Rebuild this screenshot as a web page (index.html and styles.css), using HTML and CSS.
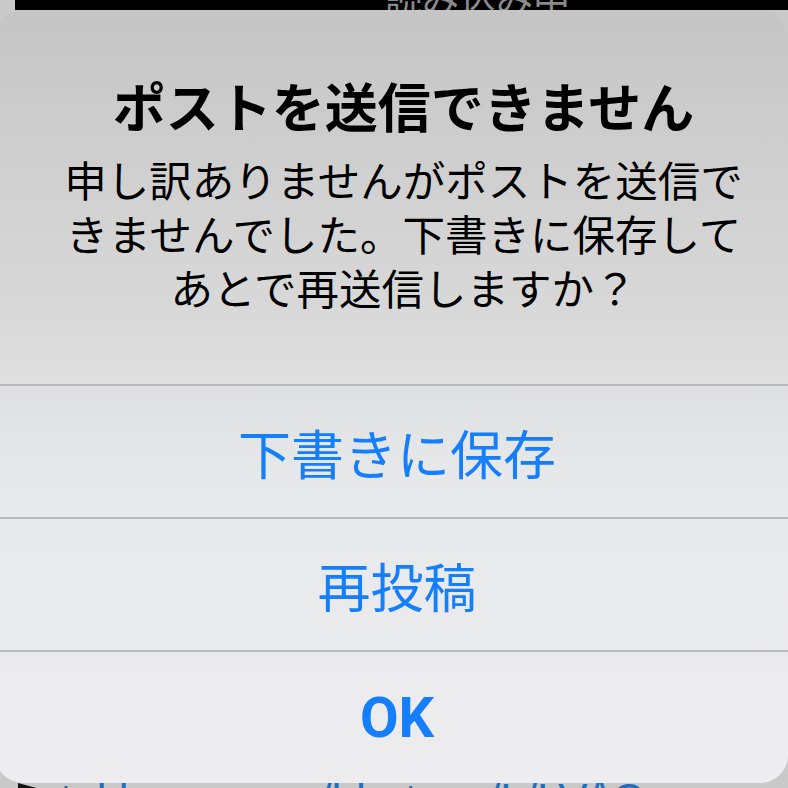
FILE: index.html
```html
<!DOCTYPE html>
<html lang="ja">
  <head>
    <meta charset="UTF-8" />
    <meta name="viewport" content="width=device-width, initial-scale=1.0" />
    <title>ポストを送信できません</title>
    <link rel="stylesheet" href="styles.css">
  </head>

  <body>
    <div class="screen">
      <!-- what is left of the page behind the alert -->
      <div class="topbar"><span>読み込み中</span></div>

      <div class="alert">
        <div class="alert-body">
          <h1 class="alert-title">ポストを送信できません</h1>
          <p class="alert-message">申し訳ありませんがポストを送信できませんでした。下書きに保存してあとで再送信しますか？</p>
        </div>
        <button class="alert-action">下書きに保存</button>
        <button class="alert-action">再投稿</button>
        <button class="alert-action alert-action_main">OK</button>
      </div>

      <div class="bottombar">
        <span class="arrow"></span>
        <span class="link">tekk.con.com/hhotsoo/L/LV/\C</span>
      </div>
    </div>
  </body>
</html>
```

FILE: styles.css
```css
body {
  margin: 0;
  background: #c9c9c9;
  font-family: "Noto Sans CJK JP", "Noto Sans", sans-serif;
}

.screen {
  display: flex;
  flex-direction: column;
  width: 788px;
  height: 788px;
  overflow: hidden;
}

.topbar {
  display: flex;
  align-items: flex-end;
  flex-shrink: 0;
  height: 10px;
  margin-left: 15px;
  padding-left: 370px;
  background: #000;
  overflow: hidden;
}

.topbar span {
  color: #8a8a8a;
  font-size: 37px;
  line-height: 36px;
  margin-bottom: -6px;
  white-space: nowrap;
}

.alert {
  display: flex;
  flex-direction: column;
  flex-shrink: 0;
  height: 773px;
  margin-left: -5px;
  width: 793px;
  border-radius: 28px;
  overflow: hidden;
  background: linear-gradient(
    180deg,
    #c5c5c5 0%,
    #d9d9d9 40%,
    #e7e8ea 60%,
    #ededef 100%
  );
}

.alert-body {
  height: 375px;
  box-sizing: border-box;
  padding: 65px 38px 0 62px;
  text-align: center;
  color: #000;
}

.alert-title {
  margin: 0;
  font-size: 53px;
  font-weight: 700;
  line-height: 60px;
}

.alert-message {
  margin: 17px 0 0;
  font-size: 42.5px;
  font-weight: 400;
  line-height: 54px;
}

.alert-action {
  height: 133px;
  flex-shrink: 0;
  border: none;
  border-top: 2px solid #b9b9bb;
  background: transparent;
  color: #147efb;
  font-family: "Noto Sans CJK JP", sans-serif;
  font-size: 53px;
  font-weight: 400;
  padding: 0 0 0 11px;
}

.alert-action_main {
  font-family: "Roboto", "Noto Sans", sans-serif;
  font-size: 56px;
  font-weight: 700;
}

.bottombar {
  display: flex;
  align-items: flex-start;
  height: 5px;
  padding-left: 18px;
  overflow: hidden;
}

.arrow {
  width: 22px;
  height: 10px;
  background: #111;
  clip-path: polygon(0 0, 100% 60%, 0 100%);
}

.link {
  margin-left: 20px;
  margin-top: 2px;
  color: #1f6fbf;
  font-family: "Liberation Sans", sans-serif;
  font-size: 44px;
  line-height: 30px;
  white-space: nowrap;
}
```
